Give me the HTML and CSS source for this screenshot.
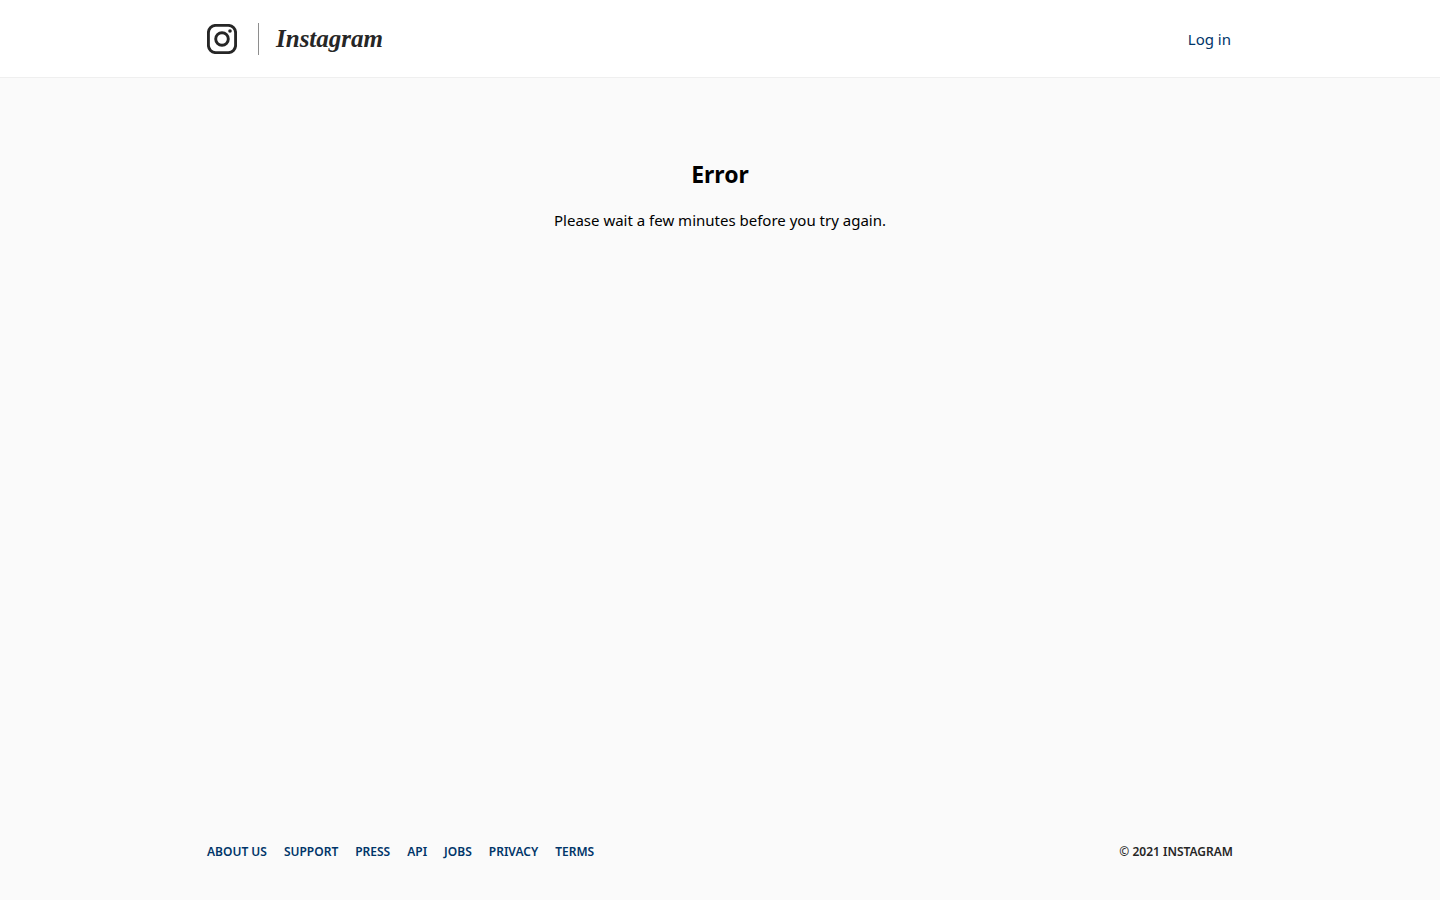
FILE: index.html
```
<!DOCTYPE html>
<html lang="en">
<head>
<meta charset="utf-8">
<meta name="viewport" content="width=device-width, initial-scale=1">
<title>Error • Instagram</title>
<link rel="stylesheet" href="styles.css">
</head>
<body>
<header class="topbar">
  <div class="container topbar-inner">
    <a class="brand" href="#">
      <svg class="brand-icon" viewBox="0 0 30 30" aria-hidden="true">
        <rect x="1.4" y="1.4" width="27.2" height="27.2" rx="7.3"/>
        <circle cx="15" cy="15" r="6.3"/>
        <circle class="brand-dot" cx="23" cy="7" r="1.8"/>
      </svg>
      <span class="brand-name">Instagram</span>
    </a>
    <a class="login" href="#">Log in</a>
  </div>
</header>
<main class="message">
  <h1 class="message-title">Error</h1>
  <p class="message-text">Please wait a few minutes before you try again.</p>
</main>
<footer class="container footer">
  <nav class="footer-nav" aria-label="Footer">
    <a href="#">About us</a>
    <a href="#">Support</a>
    <a href="#">Press</a>
    <a href="#">API</a>
    <a href="#">Jobs</a>
    <a href="#">Privacy</a>
    <a href="#">Terms</a>
  </nav>
  <span class="copyright">© 2021 Instagram</span>
</footer>
</body>
</html>
```
FILE: styles.css
```
* {
  box-sizing: border-box;
}

body {
  display: flex;
  flex-direction: column;
  min-height: 100vh;
  margin: 0;
  background: #fafafa;
  color: #000;
  font: 15px/24px "Noto Sans", "Open Sans", sans-serif;
}

a {
  color: #003569;
  text-decoration: none;
}

.container {
  width: 100%;
  max-width: 1066px;
  margin: 0 auto;
  padding: 0 20px;
}

.topbar {
  background: #fff;
  border-bottom: 1px solid #efefef;
}

.topbar-inner {
  display: flex;
  align-items: center;
  justify-content: space-between;
  height: 77px;
}

.brand {
  display: flex;
  align-items: center;
  gap: 21px;
  color: #262626;
}

.brand-icon {
  width: 30px;
  height: 30px;
  fill: none;
  stroke: #262626;
  stroke-width: 2.9;
}

.brand-icon .brand-dot {
  fill: #262626;
  stroke: none;
}

.brand-name {
  padding-left: 17px;
  border-left: 1px solid #8e8e8e;
  font: italic bold 25px/32px "Liberation Serif", serif;
}

.login {
  padding-right: 2px;
}

.message {
  flex: 1;
  padding: 80px 20px 40px;
  text-align: center;
}

.message-title {
  margin: 0 0 18px;
  font-size: 23px;
  line-height: 32px;
}

.message-text {
  margin: 0;
}

.footer {
  display: flex;
  justify-content: space-between;
  flex-wrap: wrap;
  padding-bottom: 38px;
  font-size: 12px;
  line-height: 20px;
  font-weight: 600;
  text-transform: uppercase;
}

.footer-nav {
  display: flex;
  flex-wrap: wrap;
  gap: 0 17px;
}

.copyright {
  color: #262626;
}
```
